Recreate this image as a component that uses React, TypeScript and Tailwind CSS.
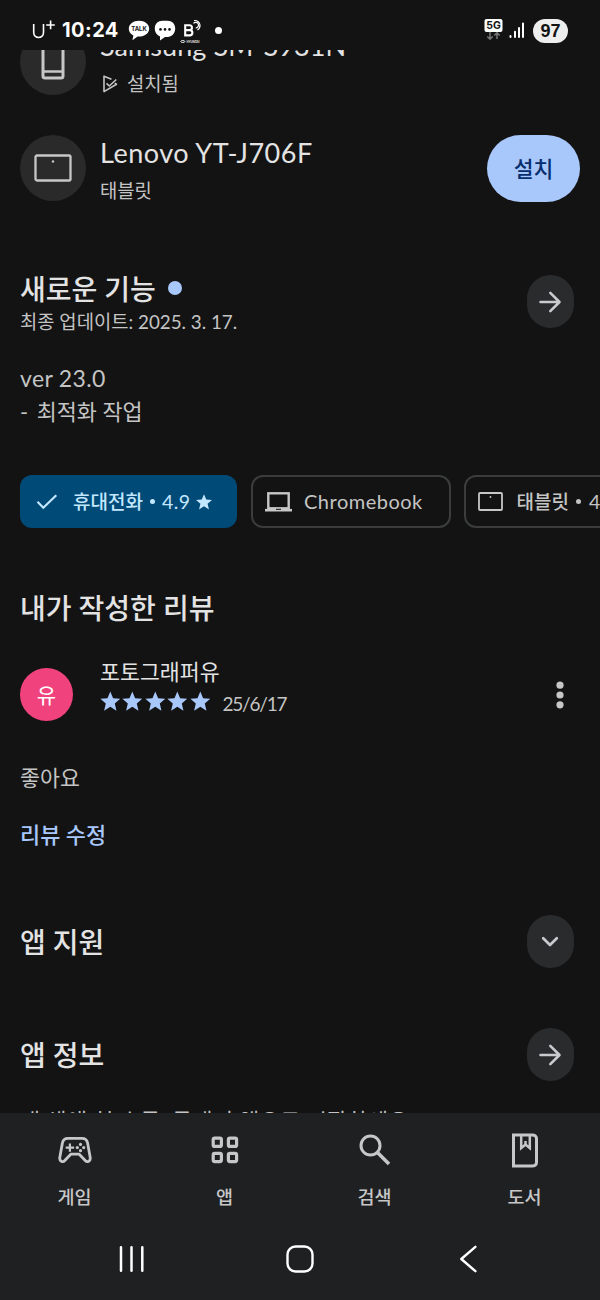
import React from "react";

const STAR = "M12 17.8 18.6 22l-1.800-7.600L22.600 9.300l-7.600-.6L12 1.500 9 8.700l-7.600.6 5.800 5.100L5.400 22z";

function StatusBar() {
  return (
    <header className="flex h-[50px] shrink-0 items-start bg-[#131313] pl-[32px] pr-[32px] text-white">
      <div className="flex h-[50px] items-start pt-[18px]">
        <svg width="23" height="24" viewBox="0 0 23 24" fill="none" stroke="#fff" strokeWidth="1.600">
          <path d="M1.700 6v8.600a4.900 4.900 0 0 0 9.800 0V6M18.600 2.600v8.600M14.200 7h8.600" />
        </svg>
        <span className="ml-[7px] w-[57px] whitespace-nowrap text-[20px] font-bold leading-[25px] tracking-[0.450px] font-['Inter',sans-serif]">10:24</span>
        <svg width="22" height="22" viewBox="0 0 22 22" className="ml-[9px] mt-[2px]">
          <path d="M11 .8C5.300.8.8 4.300.8 8.700c0 3 1.900 5.400 4.600 6.800L4.400 20.200l5.200-3.700 1.400.1c5.700 0 10.200-3.500 10.200-7.900S16.700.8 11 .8Z" fill="#fff" />
          <text x="3.200" y="11.400" textLength="15.600" lengthAdjust="spacingAndGlyphs" fontFamily="Inter, sans-serif" fontWeight="700" fontSize="6.800" fill="#131313">TALK</text>
        </svg>
        <svg width="22" height="22" viewBox="0 0 22 22" className="ml-[4px] mt-[2px]">
          <path d="M8.500.8h5C18 .8 21.200 3.800 21.200 8.500s-3.200 8.500-7.700 8.500h-2.500L6 20.400v-4C3 15.200.8 12.300.8 8.500.8 3.800 4 .8 8.500.8Z" fill="#fff" />
          <circle cx="6.500" cy="9.400" r="1.300" fill="#131313" /><circle cx="11" cy="9.400" r="1.300" fill="#131313" /><circle cx="15.500" cy="9.400" r="1.300" fill="#131313" />
        </svg>
        <svg width="23" height="26" viewBox="0 0 23 26" className="ml-[4px]" fill="none" stroke="#fff">
          <path d="M5.200 7.200h4.300a2.400 2.400 0 0 1 0 4.900H5.200zM5.200 12.100h5a2.700 2.700 0 0 1 0 5.300h-5z" strokeWidth="2.100" />
          <path d="M13.500 5.500a2.800 2.800 0 1 1 2.200 4.500M14 2.600a5.200 5.200 0 0 1 6 4.400 5.700 5.700 0 0 1-2.500 5" strokeWidth="1.200" />
          <ellipse cx="2.800" cy="23.500" rx="2" ry="1" strokeWidth=".9" />
          <text x="6.500" y="24.800" textLength="13" fontFamily="Inter, sans-serif" fontWeight="700" fontSize="3" fill="#ddd" stroke="none">HYUNDAI</text>
        </svg>
        <span className="ml-[12px] mt-[9px] size-[7px] rounded-full bg-white" />
      </div>
      <div className="ml-auto flex items-start pt-[19px]">
        <svg width="20" height="22" viewBox="0 0 20 22">
          <rect x=".5" y="0" width="18" height="13" rx="2" fill="#fff" />
          <text x="9.500" y="10.300" textAnchor="middle" fontFamily="Inter, sans-serif" fontWeight="700" fontSize="10.500" fill="#131313">5G</text>
          <path d="M6 13v7M3.300 17.500 6 20.200l2.700-2.700M13 20v-6M10.300 16.500 13 13.800l2.700 2.700" stroke="#777" strokeWidth="1.500" fill="none" />
        </svg>
        <svg width="18" height="18" viewBox="0 0 18 18" className="ml-[4px] mt-[2px]" stroke="#fff" strokeWidth="2" strokeLinecap="round">
          <path d="M2.500 15v1M7 10.800V16M11 7v9M15 2.500V16" />
        </svg>
        <span className="ml-[7px] flex h-[24px] w-[35px] items-center justify-center rounded-full bg-[#eee] text-[18px] font-bold leading-none text-[#131313] font-['Liberation_Sans',sans-serif]">97</span>
      </div>
    </header>
  );
}

function ArrowIcon() {
  return (
    <svg width="24" height="24" viewBox="0 0 24 24" fill="none" stroke="#c9cace" strokeWidth="2.600" strokeLinecap="round" strokeLinejoin="round">
      <path d="M2.500 12h18.500M12.300 2.800l9.200 9.200-9.200 9.200" />
    </svg>
  );
}

function RoundButton({ children }: { children: React.ReactNode }) {
  return <button className="flex h-[53px] w-[47px] shrink-0 items-center justify-center rounded-full bg-[#2a2b2d]">{children}</button>;
}

function NavItem({ label, children }: { label: string; children: React.ReactNode }) {
  return (
    <div className="flex w-[150px] flex-col items-center">
      <div className="flex h-[36px] items-center justify-center">{children}</div>
      <span className="mr-[1px] mt-[16px] text-[18.500px] font-medium leading-[26px]">{label}</span>
    </div>
  );
}

function Dot() {
  return <span className="size-[5px] rounded-full bg-current" />;
}

export default function App() {
  return (
    <div className="flex h-[1300px] w-[600px] flex-col overflow-hidden bg-[#131313] whitespace-nowrap text-[#e3e3e3] font-['Lato','Noto_Sans_CJK_KR',sans-serif]">
      <StatusBar />
      <main className="flex h-[1063px] shrink-0 flex-col overflow-hidden">
        <div className="mt-[-21px] flex h-[66px] shrink-0 pl-[20px]">
          <div className="flex size-[66px] items-center justify-center rounded-full bg-[#2a2a2a]">
            <svg width="24" height="38" viewBox="0 0 24 38" fill="none" stroke="#c7c7c7">
              <rect x="2" y="1.500" width="20" height="33.500" rx="2" strokeWidth="3" />
              <path d="M2 28.500h20" strokeWidth="2.500" />
            </svg>
          </div>
          <div className="ml-[14px] flex flex-col">
            <span className="mt-[-1px] text-[27px] leading-[36px] tracking-[0.080px]">Samsung SM-S931N</span>
            <div className="mt-[6px] flex items-center text-[#c4c4c4]">
              <svg width="17" height="18" viewBox="0 0 17 18" className="ml-[2px]" fill="none" stroke="#c4c4c4" strokeWidth="1.600" strokeLinejoin="round">
                <path d="M9.500 4.300 2 1.200v15.400L14.500 9.200l-1.700-1M4.500 8.300 7.300 11l7-6.500" />
              </svg>
              <span className="ml-[8px] text-[18.800px] leading-[28px]">설치됨</span>
            </div>
          </div>
        </div>

        <div className="mt-[40px] flex h-[67px] shrink-0 pl-[20px] pr-[20px]">
          <div className="flex size-[66px] items-center justify-center rounded-full bg-[#2a2a2a]">
            <svg width="38" height="28" viewBox="0 0 38 28" fill="none" stroke="#c7c7c7">
              <rect x="1.500" y="1.500" width="35" height="25" rx="1.500" strokeWidth="2.300" />
              <circle cx="19" cy="7.500" r="1.200" fill="#c7c7c7" stroke="none" />
            </svg>
          </div>
          <div className="ml-[14px] flex flex-col">
            <span className="text-[27px] leading-[36px] tracking-[0.500px]">Lenovo YT-J706F</span>
            <span className="mt-[6px] text-[18.800px] leading-[28px] text-[#c4c4c4]">태블릿</span>
          </div>
          <button className="ml-auto flex h-[67px] w-[93px] items-center justify-center rounded-full bg-[#a8c7fa] pt-[1px] text-[21.500px] font-medium text-[#062e6f]">설치</button>
        </div>

        <div className="mt-[69px] flex h-[68px] shrink-0 justify-between pl-[20px] pr-[26.500px]">
          <div className="flex flex-col">
            <div className="flex items-center">
              <h2 className="text-[28px] font-medium leading-[36px]">새로운 기능</h2>
              <span className="mb-[2px] ml-[12px] size-[14px] rounded-full bg-[#a8c7fa]" />
            </div>
            <span className="mt-[2px] text-[18.800px] leading-[26px] text-[#c4c4c4]">최종 업데이트: 2025. 3. 17.</span>
          </div>
          <div className="pt-[4px]"><RoundButton><ArrowIcon /></RoundButton></div>
        </div>

        <div className="mt-[22px] flex h-[68px] shrink-0 flex-col pl-[20px] text-[#c4c4c4]">
          <span className="text-[23px] leading-[34px] tracking-[0.350px]">ver 23.0</span>
          <span className="text-[21.800px] leading-[34px]"><span className="mr-[2px] tracking-[1px]">-</span> 최적화 작업</span>
        </div>

        <div className="mt-[46px] flex h-[53px] shrink-0 gap-[14px] pl-[20px] text-[19px]">
          <div className="flex w-[217px] shrink-0 items-center rounded-[12px] bg-[#004a77] pl-[16px] text-[#c2e7ff]">
            <svg width="22" height="16" viewBox="0 0 22 16" fill="none" stroke="#c2e7ff" strokeWidth="2.200"><path d="M1.500 7.800l5.800 5.900L20.300 1.200" /></svg>
            <span className="ml-[15px] mr-[7px] mt-[1px] font-medium">휴대전화</span>
            <Dot />
            <span className="ml-[7px] text-[19.500px] tracking-[0.400px]">4.9</span>
            <svg width="18" height="18" viewBox="0 0 24 24" className="ml-[5px]" fill="#c2e7ff"><path d={STAR} /></svg>
          </div>
          <div className="ml-[-0.500px] flex w-[200px] shrink-0 items-center rounded-[12px] border-2 border-[#3b3d3d] pl-[12px] text-[#c4c4c4]">
            <svg width="27" height="20" viewBox="0 0 27 20" fill="none" stroke="#c7c7c7">
              <rect x="3.300" y="1.300" width="20.400" height="15" strokeWidth="2.400" />
              <path d="M0 18.200h27" strokeWidth="2.600" /><path d="M11 17.300h5" stroke="#131313" strokeWidth="1" />
            </svg>
            <span className="mb-[2px] ml-[12.500px] text-[20px] tracking-[0.500px]">Chromebook</span>
          </div>
          <div className="ml-[-1px] flex w-[200px] shrink-0 items-center rounded-[12px] border-2 border-[#3b3d3d] pl-[12px] text-[#c4c4c4]">
            <svg width="25" height="19" viewBox="0 0 25 19" fill="none" stroke="#c7c7c7"><rect x="1" y="1" width="23" height="17" rx="1" strokeWidth="1.800" /><circle cx="12.500" cy="5" r=".9" fill="#c7c7c7" stroke="none" /></svg>
            <span className="ml-[14px] mr-[7px] mt-[1px] font-medium">태블릿</span>
            <Dot />
            <span className="ml-[8px] text-[19.500px] tracking-[0.400px]">4.6</span>
          </div>
        </div>

        <h2 className="mt-[62px] shrink-0 pl-[20px] text-[28px] font-medium leading-[36px]">내가 작성한 리뷰</h2>

        <div className="mt-[31px] flex h-[68px] shrink-0 items-center pl-[20px] pr-[33px]">
          <div className="mt-[7px] flex size-[53px] items-center justify-center rounded-full bg-[#f0427c] text-[21px] text-white">유</div>
          <div className="ml-[27px] flex h-[68px] flex-col">
            <span className="text-[21.700px] leading-[30px]">포토그래퍼유</span>
            <div className="mt-[-1px] flex h-[32px] items-center">
              <div className="mb-[2px] ml-[-0.500px] flex gap-[2px]">
                {[0, 1, 2, 3, 4].map((n) => (
                  <svg key={n} width="20.600" height="20.600" viewBox="1 1 22 22" fill="#a8c7fa"><path d={STAR} /></svg>
                ))}
              </div>
              <span className="ml-[12px] mt-[5px] text-[19px] tracking-[-1.200px] text-[#c4c4c4]">25/6/17</span>
            </div>
          </div>
          <svg width="14" height="28" viewBox="0 0 14 28" className="ml-auto mt-[7px]" fill="#c7c7c7"><circle cx="7" cy="4.200" r="3.600" /><circle cx="7" cy="14" r="3.600" /><circle cx="7" cy="23.800" r="3.600" /></svg>
        </div>

        <p className="mt-[37px] shrink-0 pl-[20px] text-[21.700px] leading-[32px] text-[#c4c4c4]">좋아요</p>
        <span className="mt-[25px] shrink-0 pl-[20px] text-[21.900px] font-medium leading-[32px] text-[#a8c7fa]">리뷰 수정</span>

        <div className="mt-[64px] flex h-[53px] shrink-0 items-center justify-between pl-[20px] pr-[26.500px]">
          <h2 className="text-[28px] font-medium leading-[36px]">앱 지원</h2>
          <RoundButton>
            <svg width="18" height="12" viewBox="0 0 18 12" fill="none" stroke="#c9cace" strokeWidth="2.700" strokeLinecap="round" strokeLinejoin="round"><path d="M2.200 2.200 9 9l6.800-6.800" /></svg>
          </RoundButton>
        </div>
        <div className="mt-[60px] flex h-[53px] shrink-0 items-center justify-between pl-[20px] pr-[26.500px]">
          <h2 className="text-[28px] font-medium leading-[36px]">앱 정보</h2>
          <RoundButton><ArrowIcon /></RoundButton>
        </div>
        <p className="mt-[24px] shrink-0 pl-[20px] text-[21.800px] leading-[32px] tracking-[0.400px] text-[#c4c4c4]">내 생애 첫 수국, 국내기 앱으로 시작하세요!</p>
      </main>

      <footer className="flex h-[187px] shrink-0 flex-col bg-[#1f2022] text-[#c7c7c7]">
        <nav className="flex pt-[19px]">
          <NavItem label="게임">
            <svg width="34" height="28" viewBox="0 0 34 28" fill="none" stroke="#c7c7c7" strokeWidth="2.800" strokeLinejoin="round">
              <path d="M10 2.400h14c3 0 5 1.600 5.600 4.600l2.600 14.500c.6 3.600-2.900 5.200-5 3l-6-6.300H12.800l-6 6.300c-2.100 2.200-5.600.6-5-3L4.400 7C5 4 7 2.400 10 2.400Z" />
              <path d="M7.700 11.600h8.400M11.900 7.400v8.400" strokeWidth="2.200" />
              <g fill="#c7c7c7" stroke="none"><circle cx="22.500" cy="8.400" r="1.600" /><circle cx="22.500" cy="14.700" r="1.600" /><circle cx="19.300" cy="11.600" r="1.600" /><circle cx="25.700" cy="11.600" r="1.600" /></g>
            </svg>
          </NavItem>
          <NavItem label="앱">
            <svg width="28" height="28" viewBox="0 0 28 28" fill="none" stroke="#c7c7c7" strokeWidth="3.200">
              <rect x="2.200" y="2.200" width="8.200" height="8.200" rx="1.500" /><rect x="17.400" y="2.200" width="8.200" height="8.200" rx="1.500" /><rect x="2.200" y="17.400" width="8.200" height="8.200" rx="1.500" /><rect x="17.400" y="17.400" width="8.200" height="8.200" rx="1.500" />
            </svg>
          </NavItem>
          <NavItem label="검색">
            <svg width="32" height="32" viewBox="0 0 32 32" fill="none" stroke="#c7c7c7" strokeWidth="3"><circle cx="11.500" cy="11.500" r="9.500" /><path d="M18.200 18.200 30 30" strokeWidth="3.500" /></svg>
          </NavItem>
          <NavItem label="도서">
            <svg width="28" height="35" viewBox="0 0 28 35" fill="none" stroke="#c7c7c7" strokeWidth="3">
              <path d="M2.500 2h19c2.200 0 4 1.300 4 3.500v24c0 2.200-1.800 3.500-4 3.500h-19z" />
              <path d="M10.200 2v13l4.300-3.500 4.300 3.500V2" strokeWidth="2.500" /><path d="M14.500 8v4" strokeWidth="2.500" />
            </svg>
          </NavItem>
        </nav>
        <div className="mt-[34px] flex h-[30px] items-center pl-[119px]">
          <svg width="26" height="28" viewBox="0 0 26 28" stroke="#fff" strokeWidth="2.500" strokeLinecap="round"><path d="M2 2.200v23.600M12.500 2.200v23.600M23.300 2.200v23.600" /></svg>
          <svg width="28" height="28" viewBox="0 0 28 28" className="ml-[140.500px]" fill="none" stroke="#fff" strokeWidth="2.400"><rect x="1.500" y="1.500" width="25" height="25" rx="8" /></svg>
          <svg width="18" height="28" viewBox="0 0 18 28" className="ml-[145px]" fill="none" stroke="#fff" strokeWidth="2.400" strokeLinecap="round" strokeLinejoin="round"><path d="M16.400 1.800 2.300 14l14.100 12.200" /></svg>
        </div>
      </footer>
    </div>
  );
}
